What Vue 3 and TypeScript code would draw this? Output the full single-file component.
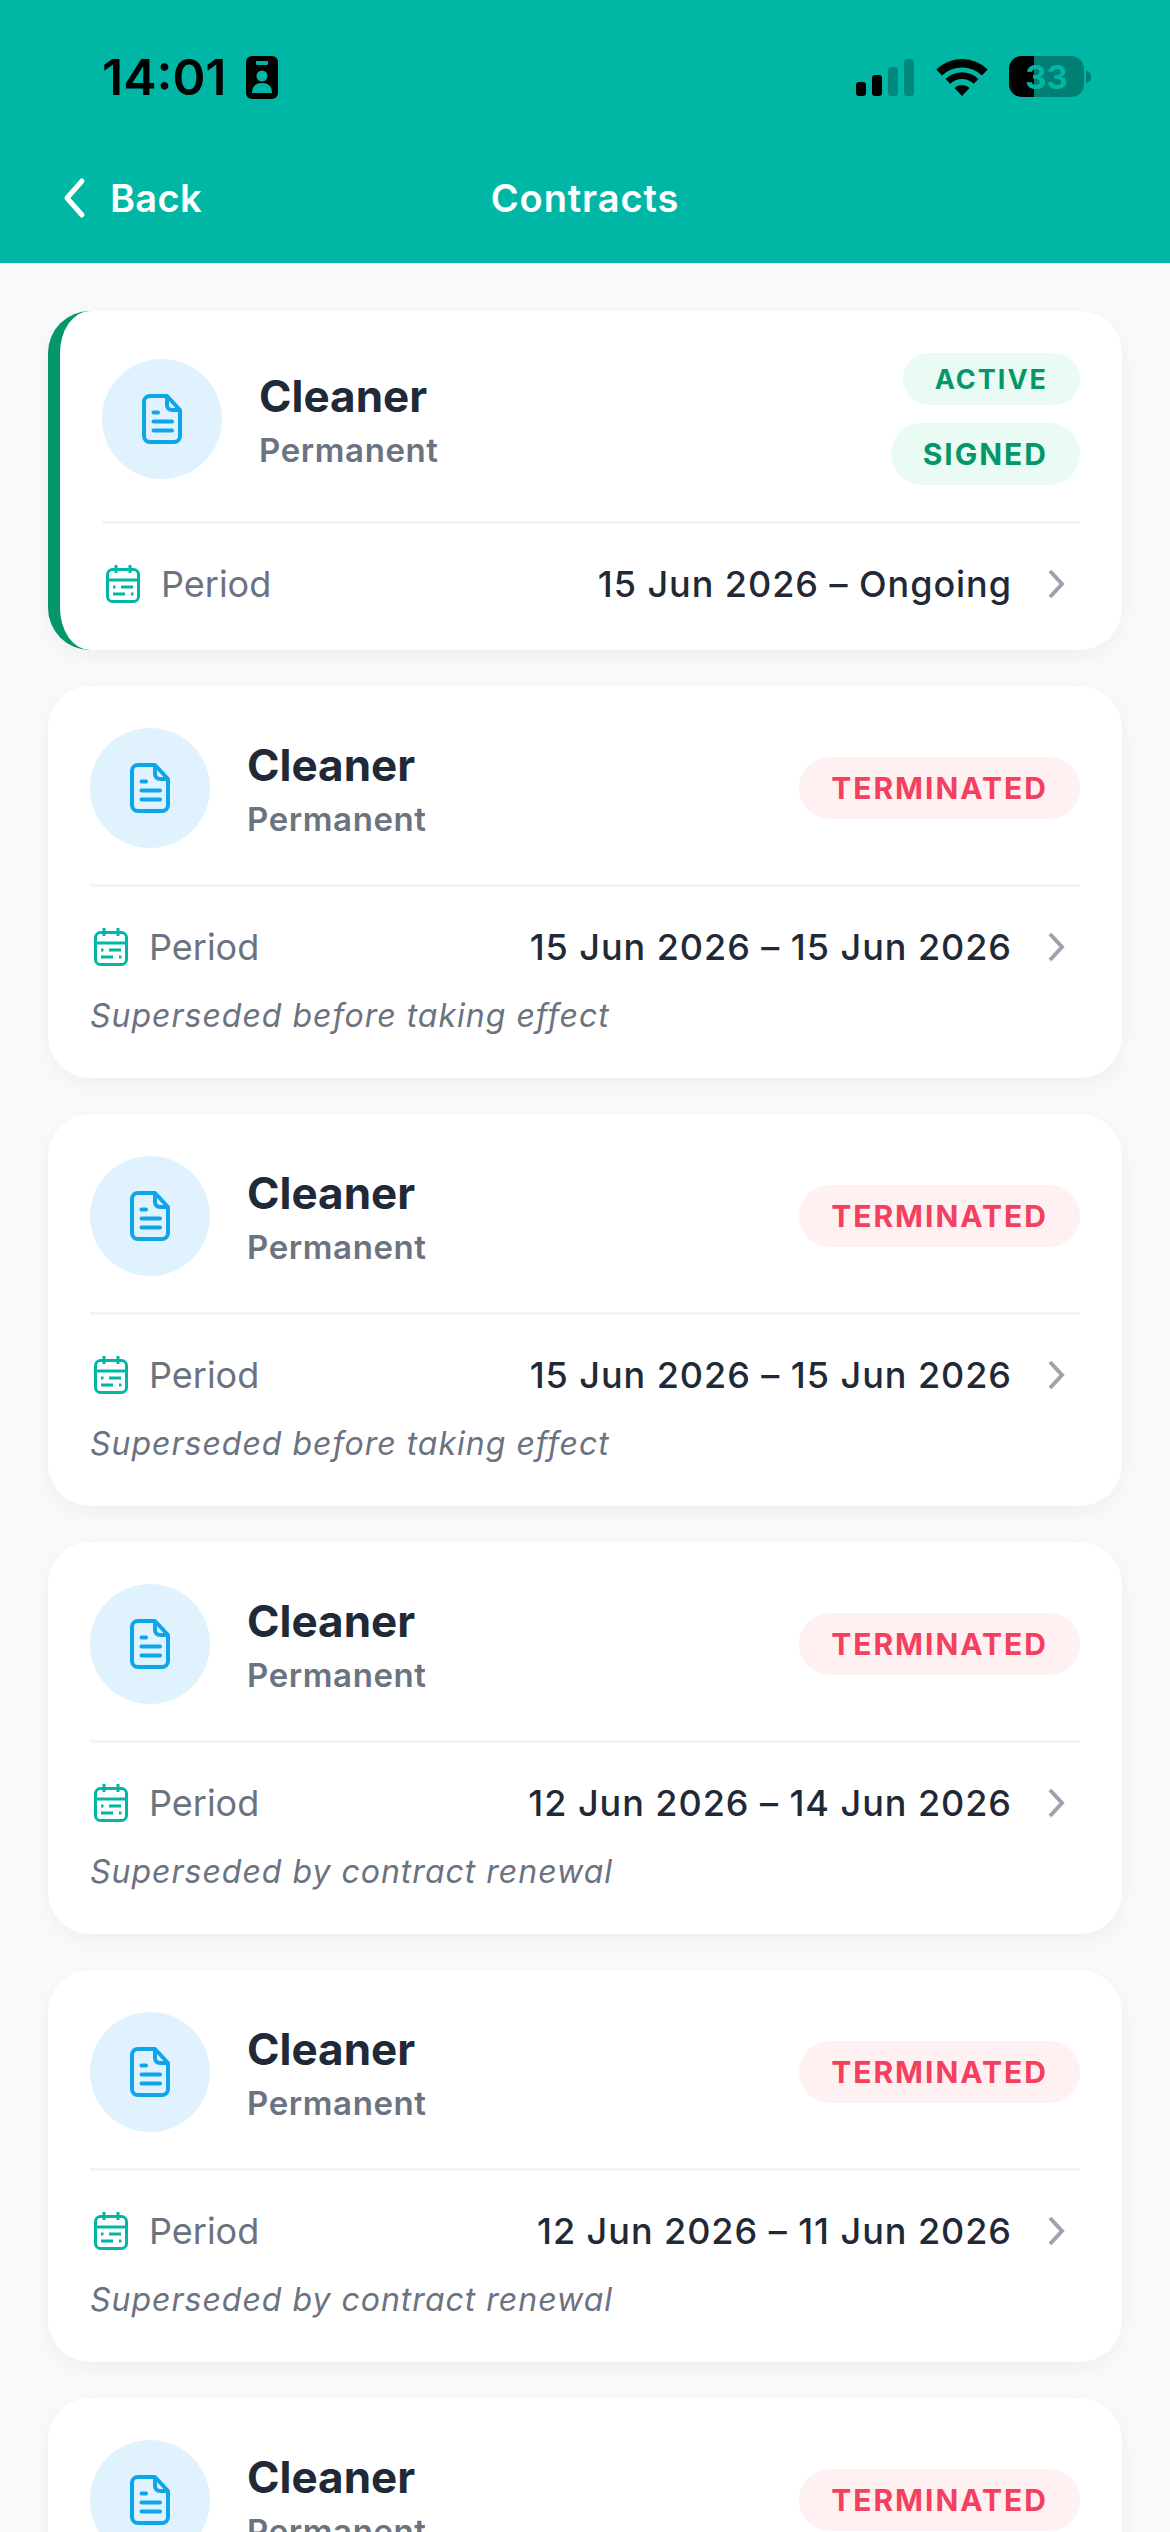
<script setup lang="ts">
type Contract = {
  id: number
  period: string
  note?: string
  badges: string[]
  active?: boolean
}

const contracts: Contract[] = [
  { id: 1, period: '15 Jun 2026 – Ongoing', badges: ['ACTIVE', 'SIGNED'], active: true },
  { id: 2, period: '15 Jun 2026 – 15 Jun 2026', note: 'Superseded before taking effect', badges: ['TERMINATED'] },
  { id: 3, period: '15 Jun 2026 – 15 Jun 2026', note: 'Superseded before taking effect', badges: ['TERMINATED'] },
  { id: 4, period: '12 Jun 2026 – 14 Jun 2026', note: 'Superseded by contract renewal', badges: ['TERMINATED'] },
  { id: 5, period: '12 Jun 2026 – 11 Jun 2026', note: 'Superseded by contract renewal', badges: ['TERMINATED'] },
  { id: 6, period: '10 Jun 2026 – 11 Jun 2026', note: 'Superseded by contract renewal', badges: ['TERMINATED'] },
]

const badgeClass = (label: string) => {
  if (label === 'TERMINATED') return 'badge red'
  if (label === 'ACTIVE') return 'badge green small'
  return 'badge green'
}
</script>

<template>
  <div class="page">
    <header class="top">
      <div class="status">
        <div class="clock">
          <span class="time">14:01</span>
          <svg class="contact" width="32" height="43" viewBox="0 0 32 43">
            <rect width="32" height="43" rx="6" fill="#000" />
            <rect x="10" y="5" width="12" height="4" rx="1" fill="#00B7A6" />
            <circle cx="16" cy="20" r="5.5" fill="#00B7A6" />
            <path d="M6 37 C6 30 10 27 16 27 C22 27 26 30 26 37 Z" fill="#00B7A6" />
          </svg>
        </div>
        <div class="sys">
          <div class="signal">
            <i class="bar b1"></i>
            <i class="bar b2"></i>
            <i class="bar b3"></i>
            <i class="bar b4"></i>
          </div>
          <svg class="wifi" width="52" height="37" viewBox="-1 0 52 37">
            <path d="M-.7 10.4A37 37 0 0 1 50.7 10.4L44.9 16.4A28.7 28.7 0 0 0 5.1 16.4Z" />
            <path d="M8.5 20A23.7 23.7 0 0 1 41.5 20L36.8 24.8A17 17 0 0 0 13.2 24.8Z" />
            <path d="M17.4 29.1A11 11 0 0 1 32.6 29.1L25 37Z" />
          </svg>
          <div class="battery">
            <div class="cell">
              <div class="charge"></div>
              <span class="level">33</span>
            </div>
            <div class="nub"></div>
          </div>
        </div>
      </div>
      <nav class="nav">
        <div class="back">
          <svg width="24" height="42" viewBox="0 0 24 42" fill="none">
            <path d="M20 4 L5 21 L20 38" stroke="#fff" stroke-width="5" stroke-linecap="round" stroke-linejoin="round" />
          </svg>
          <span>Back</span>
        </div>
        <div class="title">Contracts</div>
      </nav>
    </header>

    <main class="list">
      <article v-for="c in contracts" :key="c.id" class="card" :class="{ current: c.active }">
        <div class="head">
          <div class="avatar">
            <svg width="40" height="50" viewBox="0 0 40 50" fill="none" stroke="#0EA5E9" stroke-width="4">
              <path d="M8 2H25L38 16V42a6 6 0 0 1-6 6H8a6 6 0 0 1-6-6V8a6 6 0 0 1 6-6Z" stroke-linejoin="round" />
              <path d="M25 2V11a5 5 0 0 0 5 5H38" stroke-linejoin="round" />
              <path d="M11.5 18.5H16M11.5 27.5H30M11.5 36.5H30" stroke-linecap="round" />
            </svg>
          </div>
          <div class="who">
            <div class="name">Cleaner</div>
            <div class="kind">Permanent</div>
          </div>
          <div class="badges">
            <span v-for="b in c.badges" :key="b" :class="badgeClass(b)">{{ b }}</span>
          </div>
        </div>
        <div class="rule"></div>
        <div class="row">
          <svg class="cal" width="34" height="38" viewBox="0 0 34 38" fill="none" stroke="#00B7A6" stroke-width="3">
            <rect x="1.5" y="4.5" width="31" height="32" rx="5" />
            <path d="M1.5 15H32.5" />
            <path d="M10 0V8M24 0V8" />
            <path d="M7 22H9.5M15 22H27M7 29H19M25 29H27.5" />
          </svg>
          <span class="label">Period</span>
          <span class="value">{{ c.period }}</span>
          <svg class="chev" width="48" height="48" viewBox="0 0 48 48" fill="none">
            <path d="M18 11 L30 24 L18 37" stroke="#9CA3AF" stroke-width="4" />
          </svg>
        </div>
        <p v-if="c.note" class="note">{{ c.note }}</p>
      </article>
    </main>
  </div>
</template>

<style scoped>
.page {
  height: 2532px;
  overflow: hidden;
  background: #f9fafb;
  font-family: Inter, "Liberation Sans", sans-serif;
}

.top {
  height: 263px;
  background: #00b7a6;
  box-sizing: border-box;
}

.status {
  height: 156px;
  display: flex;
  justify-content: space-between;
  align-items: flex-start;
  padding: 56px 79px 0 102px;
  box-sizing: border-box;
}

.clock {
  display: flex;
  align-items: center;
  gap: 19px;
}

.time {
  font-size: 50px;
  line-height: 43px;
  font-weight: 600;
  color: #000;
}

.contact {
  display: block;
}

.sys {
  display: flex;
  align-items: flex-end;
  height: 41px;
}

.signal {
  display: flex;
  align-items: flex-end;
  gap: 6px;
  height: 37px;
  margin-bottom: 1px;
}

.bar {
  display: block;
  width: 10px;
  border-radius: 3px;
  background: #000;
}
.b1 { height: 14px; }
.b2 { height: 21px; }
.b3 { height: 29px; opacity: .25; }
.b4 { height: 37px; opacity: .25; }

.wifi {
  display: block;
  margin: 0 21px 1px 22px;
}

.battery {
  display: flex;
  align-items: center;
  gap: 2px;
}

.cell {
  position: relative;
  width: 75px;
  height: 41px;
  border-radius: 13px;
  overflow: hidden;
  background: rgba(0, 0, 0, .3);
  display: flex;
  align-items: center;
  justify-content: center;
}

.charge {
  position: absolute;
  left: 0;
  top: 0;
  bottom: 0;
  width: 25px;
  background: #000;
}

.level {
  position: relative;
  font-size: 33px;
  font-weight: 700;
  color: #00b7a6;
}

.nub {
  width: 5px;
  height: 12px;
  border-radius: 0 6px 6px 0;
  background: rgba(0, 0, 0, .3);
}

.nav {
  position: relative;
  display: flex;
  align-items: center;
  justify-content: center;
  height: 84px;
  color: #fff;
  font-size: 38px;
  font-weight: 600;
}

.back {
  position: absolute;
  left: 62px;
  top: 0;
  bottom: 0;
  display: flex;
  align-items: center;
  gap: 24px;
  letter-spacing: .3px;
}

.title {
  text-align: center;
  letter-spacing: .9px;
}

.list {
  display: flex;
  flex-direction: column;
  gap: 36px;
  padding: 48px 48px 0;
}

.card {
  flex: none;
  background: #fff;
  border-radius: 42px;
  padding: 42px;
  box-shadow: 0 6px 24px rgba(0, 0, 0, .05);
}

.card.current {
  border-left: 12px solid #059669;
}

.head {
  display: flex;
  align-items: center;
}

.avatar {
  flex: none;
  width: 120px;
  height: 120px;
  border-radius: 50%;
  background: #e0f2fe;
  display: flex;
  align-items: center;
  justify-content: center;
}

.who {
  flex: 1;
  margin-left: 37px;
  padding-top: 2px;
}

.name {
  font-size: 44px;
  line-height: 52px;
  font-weight: 700;
  color: #1f2937;
}

.kind {
  margin-top: 8px;
  font-size: 33px;
  line-height: 40px;
  font-weight: 600;
  letter-spacing: .6px;
  color: #6b7280;
}

.badges {
  display: flex;
  flex-direction: column;
  align-items: flex-end;
  gap: 18px;
}

.badge {
  height: 62px;
  padding: 0 32px;
  border-radius: 31px;
  display: flex;
  align-items: center;
  font-size: 30px;
  font-weight: 700;
  letter-spacing: 2px;
}

.badge.small {
  height: 52px;
  border-radius: 26px;
  font-size: 27px;
}

.green {
  background: #e9fbf3;
  color: #059669;
}

.red {
  background: #fff0f2;
  color: #f43f5e;
}

.rule {
  height: 3px;
  margin: 36px 0;
  background: #f3f4f6;
}

.row {
  display: flex;
  align-items: center;
  height: 48px;
}

.cal {
  flex: none;
  margin-left: 4px;
}

.label {
  margin-left: 21px;
  font-size: 36px;
  color: #6b7280;
}

.value {
  margin-left: auto;
  font-size: 36px;
  font-weight: 550;
  letter-spacing: .95px;
  color: #1f2937;
}

.chev {
  flex: none;
  margin-left: 20px;
}

.note {
  margin: 25px 0 0;
  font-size: 32px;
  line-height: 40px;
  font-style: italic;
  letter-spacing: 1px;
  color: #6b7280;
}
</style>

<style>
html, body {
  margin: 0;
  background: #f9fafb;
}
</style>
